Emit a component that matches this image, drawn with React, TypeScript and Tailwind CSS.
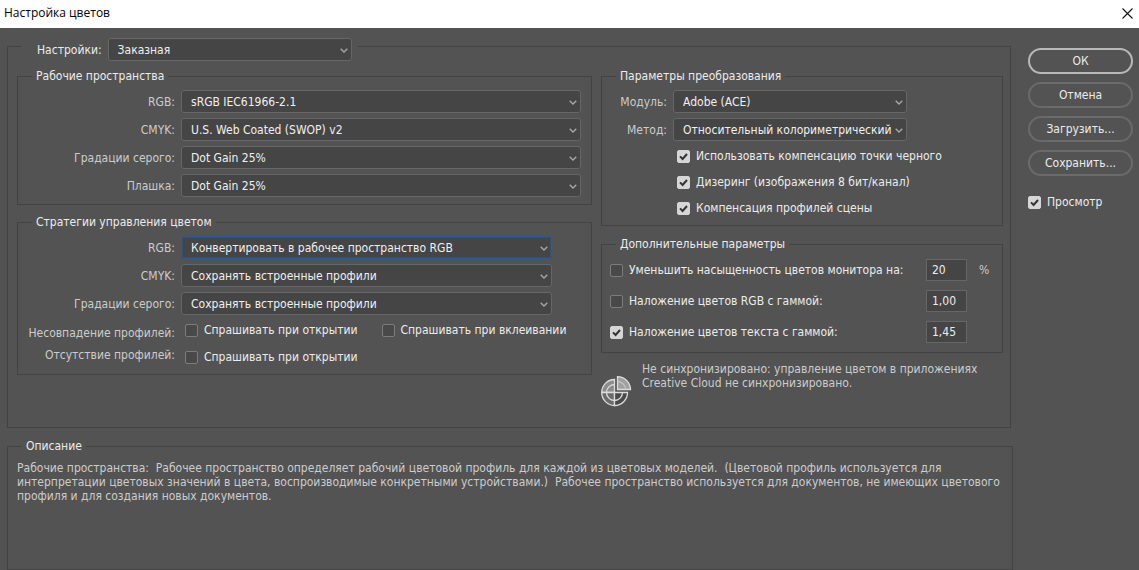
import React from "react";

type SelectProps = {
  id: string;
  options: string[];
  focused?: boolean;
};

const Select = ({ id, options, focused }: SelectProps) => (
  <div className="relative min-w-0 flex-1">
    <select
      id={id}
      className={`block h-[23px] w-full appearance-none rounded-[3px] border bg-[#454545] pr-3 pl-[9px] text-[#f0f0f0] outline-none ${
        focused
          ? "border-[#2b5a9c] inset-ring inset-ring-[#33507a]"
          : "border-[#666666]"
      }`}
    >
      {options.map((option) => (
        <option key={option}>{option}</option>
      ))}
    </select>
    <svg
      className="pointer-events-none absolute top-[9px] right-1 h-[7px] w-2"
      viewBox="0 0 8 7"
      fill="none"
      stroke="#a8a8a8"
      strokeWidth="1.3"
    >
      <path d="M0.7 1.7 L4 5 L7.3 1.7" />
    </svg>
  </div>
);

const SelectRow = ({
  label,
  labelWidth,
  ...select
}: SelectProps & { label: string; labelWidth: string }) => (
  <div className="flex items-center gap-1.5">
    <label
      htmlFor={select.id}
      className={`${labelWidth} shrink-0 text-right whitespace-nowrap text-[#cccccc]`}
    >
      {label}
    </label>
    <Select {...select} />
  </div>
);

const Checkbox = ({ label, checked }: { label: string; checked?: boolean }) => (
  <label className="flex h-[18px] items-center gap-1.5 whitespace-nowrap">
    <span className="relative size-[13px] shrink-0">
      <input
        type="checkbox"
        defaultChecked={checked}
        className="peer block size-[13px] appearance-none rounded-[2px] border border-[#7c7c7c] bg-[#494949] checked:border-[#d6d6d6] checked:bg-[#d6d6d6]"
      />
      <svg
        className="pointer-events-none absolute inset-0 hidden size-[13px] peer-checked:block"
        viewBox="0 0 13 13"
        fill="none"
        stroke="#333333"
        strokeWidth="2"
      >
        <path d="M3 6.4 L5.6 9 L10 4" />
      </svg>
    </span>
    {label}
  </label>
);

const Group = ({
  title,
  className = "",
  children,
}: {
  title: string;
  className?: string;
  children: React.ReactNode;
}) => (
  <fieldset className={`min-w-0 border border-[#434343] ${className}`}>
    <legend className="ml-3.5 px-1 leading-4">{title}</legend>
    {children}
  </fieldset>
);

const workingSpaces = [
  { id: "ws-rgb", label: "RGB:", options: ["sRGB IEC61966-2.1"] },
  { id: "ws-cmyk", label: "CMYK:", options: ["U.S. Web Coated (SWOP) v2"] },
  { id: "ws-gray", label: "Градации серого:", options: ["Dot Gain 25%"] },
  { id: "ws-spot", label: "Плашка:", options: ["Dot Gain 25%"] },
];

const policies = [
  {
    id: "pol-rgb",
    label: "RGB:",
    options: ["Конвертировать в рабочее пространство RGB"],
    focused: true,
  },
  { id: "pol-cmyk", label: "CMYK:", options: ["Сохранять встроенные профили"] },
  {
    id: "pol-gray",
    label: "Градации серого:",
    options: ["Сохранять встроенные профили"],
  },
];

const conversion = [
  { id: "engine", label: "Модуль:", options: ["Adobe (ACE)"] },
  {
    id: "intent",
    label: "Метод:",
    options: ["Относительный колориметрический"],
  },
];

const advanced = [
  {
    label: "Уменьшить насыщенность цветов монитора на:",
    value: "20",
    unit: "%",
  },
  { label: "Наложение цветов RGB с гаммой:", value: "1,00" },
  { label: "Наложение цветов текста с гаммой:", value: "1,45", checked: true },
];

const SyncIcon = () => (
  <svg
    className="size-[31px] shrink-0"
    viewBox="0 0 31 31"
    fill="none"
    stroke="#dcdcdc"
    strokeWidth="1.3"
  >
    <path d="M13.5 16.5 V3.5 A13 13 0 0 0 0.7 16.5 Z" fill="#8c8c8c" />
    <path d="M13.5 16.5 H0.7 A13 13 0 0 0 13.5 29.5 Z" fill="#6b6b6b" />
    <path d="M13.5 16.5 V29.5 A13 13 0 0 0 26.5 16.5 Z" fill="#4a4a4a" />
    <path d="M13.5 8.5 A8 8 0 1 0 21.5 16.5" />
    <path d="M16.5 13.5 V0.7 A13 13 0 0 1 29.5 13.5 Z" fill="#a0a0a0" />
    <path d="M16.5 5.5 A8 8 0 0 1 24.5 13.5" stroke="#c4c4c4" />
  </svg>
);

const DialogButton = ({
  children,
  primary,
}: {
  children: React.ReactNode;
  primary?: boolean;
}) => (
  <button
    type="button"
    className={`h-[26px] rounded-full border-2 leading-4 ${
      primary ? "border-[#b8b8b8]" : "border-[#6a6a6a]"
    }`}
  >
    {children}
  </button>
);

export default function App() {
  return (
    <div className="flex min-h-screen flex-col bg-[#535353] font-['DejaVu_Sans_Condensed','DejaVu_Sans',sans-serif] text-[12px] text-[#ececec]">
      <header className="flex h-7 items-center justify-between bg-white pr-1.5 pb-0.5 pl-1 text-black">
        <h1 className="font-['Open_Sans',sans-serif]">Настройка цветов</h1>
        <button type="button" aria-label="Закрыть">
          <svg
            className="size-[11px]"
            viewBox="0 0 11 11"
            stroke="#111111"
            strokeWidth="1.1"
          >
            <path d="M0.5 0.5 L10.5 10.5 M10.5 0.5 L0.5 10.5" />
          </svg>
        </button>
      </header>

      <div className="flex gap-[15px] pt-[3px] pr-1.5 pl-[7px]">
        <main className="min-w-0 flex-1">
          <fieldset className="mr-0.5 min-w-0 border border-[#434343] pr-[7px] pb-5 pl-[9px]">
            {/* the padding drops the select below the frame line */}
            <legend className="ml-1 pt-[7px] pr-1.5 pl-4">
              <div className="flex items-center gap-1.5">
                <label htmlFor="preset">Настройки:</label>
                <div className="flex h-6 w-[244px]">
                  <Select id="preset" options={["Заказная"]} />
                </div>
              </div>
            </legend>

            <div className="grid grid-cols-[minmax(0,575fr)_minmax(0,402fr)] gap-[9px] pt-1.5">
              <div className="flex flex-col gap-[9px]">
                <Group title="Рабочие пространства">
                  <div className="flex flex-col gap-[5px] pt-1.5 pr-2.5 pb-[7px]">
                    {workingSpaces.map((row) => (
                      <SelectRow key={row.id} labelWidth="w-[157px]" {...row} />
                    ))}
                  </div>
                </Group>

                <Group title="Стратегии управления цветом">
                  <div className="flex flex-col gap-[5px] pt-1.5 pr-[39px]">
                    {policies.map((row) => (
                      <SelectRow key={row.id} labelWidth="w-[157px]" {...row} />
                    ))}
                  </div>
                  <div className="flex items-end gap-2.5 pt-1.5 pb-2">
                    <div className="w-[157px] shrink-0 text-right leading-[22px] whitespace-nowrap text-[#cccccc]">
                      <p>Несовпадение профилей:</p>
                      <p>Отсутствие профилей:</p>
                    </div>
                    <div className="flex flex-col gap-[9px]">
                      <div className="flex gap-6">
                        <Checkbox label="Спрашивать при открытии" />
                        <Checkbox label="Спрашивать при вклеивании" />
                      </div>
                      <Checkbox label="Спрашивать при открытии" />
                    </div>
                  </div>
                </Group>
              </div>

              <div className="flex flex-col">
                <Group title="Параметры преобразования">
                  <div className="flex flex-col gap-[5px] pt-1.5 pr-[95px]">
                    {conversion.map((row) => (
                      <SelectRow key={row.id} labelWidth="w-[65px]" {...row} />
                    ))}
                  </div>
                  <div className="flex flex-col gap-2 pt-1.5 pb-2 pl-[75px]">
                    <Checkbox
                      label="Использовать компенсацию точки черного"
                      checked
                    />
                    <Checkbox
                      label="Дизеринг (изображения 8 бит/канал)"
                      checked
                    />
                    <Checkbox label="Компенсация профилей сцены" checked />
                  </div>
                </Group>

                <Group title="Дополнительные параметры" className="mt-2.5">
                  <div className="flex flex-col gap-[9px] pt-[7px] pr-[7px] pb-[9px] pl-2">
                    {advanced.map((row) => (
                      <div key={row.label} className="flex items-center">
                        <div className="flex-1">
                          <Checkbox label={row.label} checked={row.checked} />
                        </div>
                        <input
                          type="text"
                          aria-label={row.label}
                          defaultValue={row.value}
                          className="h-[22px] w-[41px] border border-[#666666] bg-[#454545] pl-[5px] outline-none"
                        />
                        <span className="w-7 pl-3 text-[#cccccc]">
                          {row.unit}
                        </span>
                      </div>
                    ))}
                  </div>
                </Group>

                <div className="flex gap-2.5 pt-[9px] text-[#cccccc]">
                  <div className="pt-3.5">
                    <SyncIcon />
                  </div>
                  <p className="leading-[14px]">
                    Не синхронизировано: управление цветом в приложениях
                    <br />
                    Creative Cloud не синхронизировано.
                  </p>
                </div>
              </div>
            </div>
          </fieldset>

          <Group title="Описание" className="mt-2.5">
            <p className="min-h-[115px] px-[9px] pt-[7px] leading-[14px] text-[#cccccc]">
              Рабочие пространства:&nbsp; Рабочее пространство определяет
              рабочий цветовой профиль для каждой из цветовых моделей.&nbsp;
              (Цветовой профиль используется для интерпретации цветовых значений
              в цвета, воспроизводимые конкретными устройствами.)&nbsp; Рабочее
              пространство используется для документов, не имеющих цветового
              профиля и для создания новых документов.
            </p>
          </Group>
        </main>

        <aside className="flex w-[105px] shrink-0 flex-col gap-2 pt-[17px]">
          <DialogButton primary>ОК</DialogButton>
          <DialogButton>Отмена</DialogButton>
          <DialogButton>Загрузить...</DialogButton>
          <DialogButton>Сохранить...</DialogButton>
          <div className="pt-[9px]">
            <Checkbox label="Просмотр" checked />
          </div>
        </aside>
      </div>
    </div>
  );
}
